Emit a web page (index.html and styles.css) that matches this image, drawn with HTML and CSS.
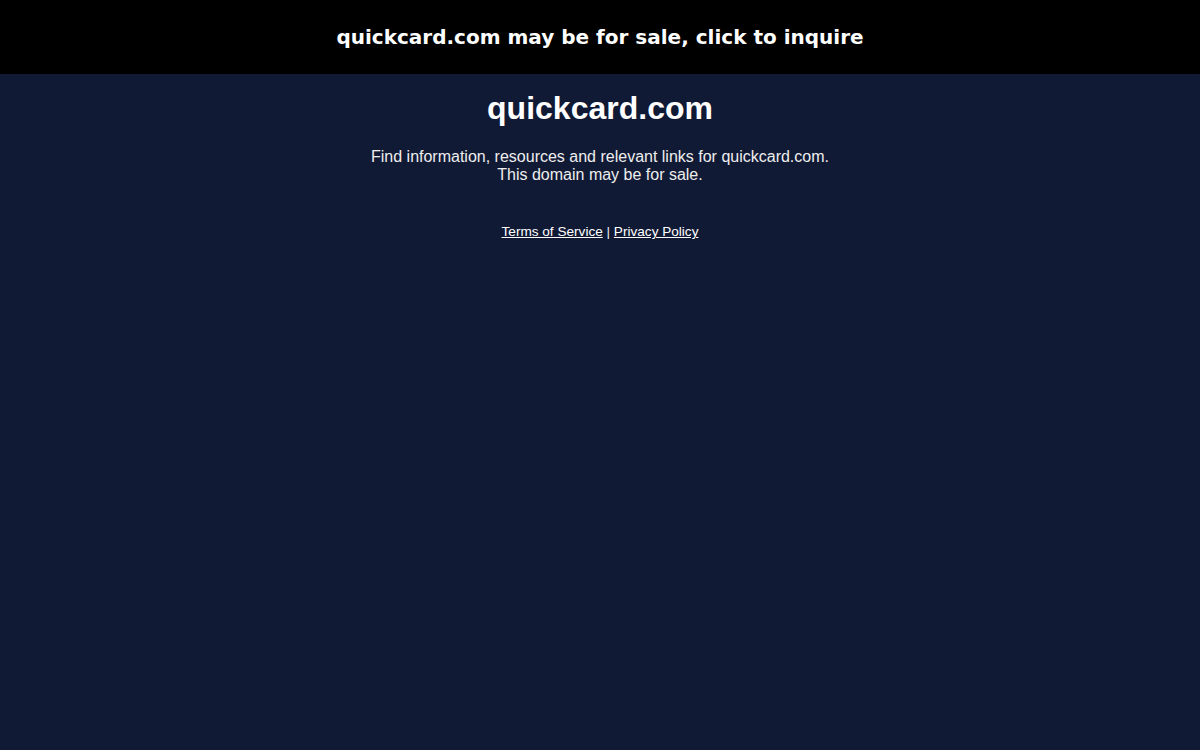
FILE: index.html
```html
<!DOCTYPE html>
<html lang="en">
<head>
    <meta charset="UTF-8">
    <meta name="viewport" content="width=device-width, initial-scale=1.0">
    <title>quickcard.com</title>
    <link rel="stylesheet" href="styles.css">
</head>
<body>
    <a class="sale-bar" href="#">quickcard.com may be for sale, click to inquire</a>
    <div class="container">
        <h1>quickcard.com</h1>
        <p class="intro">Find information, resources and relevant links for quickcard.com.<br>This domain may be for sale.</p>
        <div class="footer-links">
            <a href="#">Terms of Service</a> | <a href="#">Privacy Policy</a>
        </div>
    </div>
</body>
</html>
```

FILE: styles.css
```css
html, body {
    margin: 0;
    padding: 0;
    height: 100%;
}
body {
    background-color: #111a35;
    color: #eeeeee;
    font-family: 'Liberation Sans', Arial, sans-serif;
}
.sale-bar {
    display: block;
    background-color: #000;
    color: #fff;
    text-decoration: none;
    text-align: center;
    font-family: 'DejaVu Sans', sans-serif;
    font-weight: bold;
    font-size: 20px;
    line-height: 24px;
    padding: 25px 0;
}
.container {
    text-align: center;
}
h1 {
    margin: 16px 0 0;
    font-size: 32px;
    line-height: 37px;
    color: #fff;
}
.intro {
    margin: 21px 0 0;
    font-size: 16px;
    line-height: 18px;
}
.footer-links {
    margin-top: 40px;
    font-size: 13.6px;
    line-height: 15px;
}
.footer-links a {
    color: #fff;
}
```
